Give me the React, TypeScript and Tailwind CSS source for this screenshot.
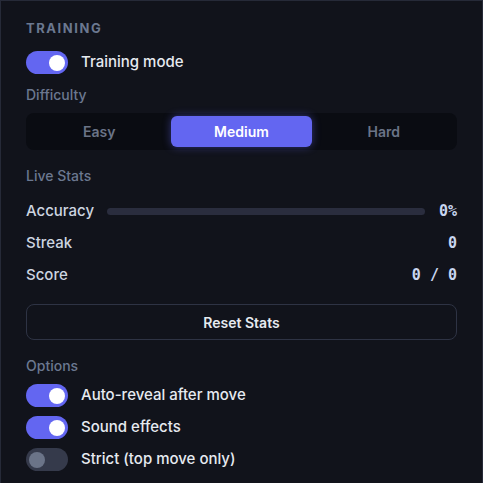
import { useState } from 'react';

type Level = 'Easy' | 'Medium' | 'Hard';

function Toggle({ on, onChange }: { on: boolean; onChange: () => void }) {
  return (
    <button
      type="button"
      onClick={onChange}
      className={`relative w-[42px] h-[23px] rounded-full shrink-0 transition-colors ${
        on ? 'bg-[#6366f1]' : 'bg-[#353a4b]'
      }`}
    >
      <span
        className={`absolute top-[3.5px] w-4 h-4 rounded-full transition-all ${
          on ? 'left-[23px] bg-white' : 'left-[3px] bg-[#6b7488]'
        }`}
      />
    </button>
  );
}

function StatRow({ label, children }: { label: string; children: React.ReactNode }) {
  return (
    <div className="flex items-center h-[32px]">
      <span className="text-[15px] font-medium text-[#cdd5e0] shrink-0">{label}</span>
      {children}
    </div>
  );
}

export default function App() {
  const [training, setTraining] = useState(true);
  const [level, setLevel] = useState<Level>('Medium');
  const [opts, setOpts] = useState({ reveal: true, sound: true, strict: false });

  const options = [
    { key: 'reveal' as const, label: 'Auto-reveal after move' },
    { key: 'sound' as const, label: 'Sound effects' },
    { key: 'strict' as const, label: 'Strict (top move only)' },
  ];

  const mono = "text-[15px] font-bold text-[#c9d6f0] font-['DejaVu_Sans_Mono',monospace]";

  return (
    <div
      className="w-[483px] min-h-[483px] bg-[#11131b] border-l border-r border-t border-[#262a38] px-[25px] pt-[18px] pb-6"
      style={{ fontFamily: 'Inter, "Noto Sans", sans-serif' }}
    >
      {/* Section heading */}
      <h3 className="text-[13px] font-bold tracking-[0.12em] text-[#6b7890] leading-[18px]">TRAINING</h3>

      <div className="flex items-center gap-[13px] mt-[14px]">
        <Toggle on={training} onChange={() => setTraining(!training)} />
        <span className="text-[15px] font-medium text-[#e6eaf0]">Training mode</span>
      </div>

      {/* Difficulty */}
      <p className="text-[14px] font-medium text-[#6b7890] mt-[12px] leading-[18px]">Difficulty</p>
      <div className="mt-[9px] grid grid-cols-3 gap-[2px] p-[3px] rounded-lg bg-[#0a0c12]">
        {(['Easy', 'Medium', 'Hard'] as Level[]).map((l) => {
          const active = level === l;
          return (
            <button
              key={l}
              type="button"
              onClick={() => setLevel(l)}
              className={`h-[31px] rounded-md text-[14px] font-semibold ${
                active
                  ? 'bg-[#6366f1] text-white font-bold shadow-[0_0_8px_rgba(99,102,241,0.45)]'
                  : 'text-[#6b7487]'
              }`}
            >
              {l}
            </button>
          );
        })}
      </div>

      {/* Live stats */}
      <p className="text-[14px] font-medium text-[#6b7890] mt-[17px] leading-[18px]">Live Stats</p>
      <div className="mt-[10px] flex flex-col">
        <StatRow label="Accuracy">
          <div className="flex-1 h-[7px] rounded-full bg-[#2a2d3e] ml-[13px]" />
          <span className={`ml-[14px] ${mono}`}>0%</span>
        </StatRow>
        <StatRow label="Streak">
          <span className={`ml-auto ${mono}`}>0</span>
        </StatRow>
        <StatRow label="Score">
          <span className={`ml-auto ${mono}`}>0 / 0</span>
        </StatRow>
      </div>

      <button
        type="button"
        className="mt-[13px] w-full h-[36px] rounded-lg border border-[#2e3344] text-[14px] font-semibold text-[#e6eaf0]"
      >
        Reset Stats
      </button>

      {/* Options */}
      <p className="text-[14px] font-medium text-[#6b7890] mt-[17px] leading-[18px]">Options</p>
      <div className="mt-[9px] flex flex-col gap-[9px]">
        {options.map((o) => (
          <div key={o.key} className="flex items-center gap-[13px]">
            <Toggle on={opts[o.key]} onChange={() => setOpts({ ...opts, [o.key]: !opts[o.key] })} />
            <span className="text-[15px] font-medium text-[#e6eaf0]">{o.label}</span>
          </div>
        ))}
      </div>
    </div>
  );
}
